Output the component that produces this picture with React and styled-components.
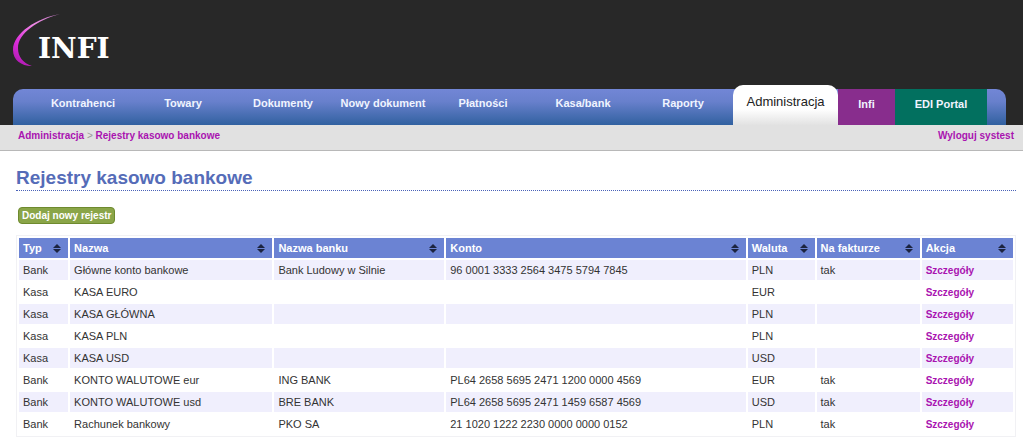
import React from "react";
import styled, { createGlobalStyle, css } from "styled-components";

const GlobalStyle = createGlobalStyle`
  body {
    margin: 0;
    background: #fff;
    color: #333;
    font: 11px/16px "Liberation Sans", Arial, sans-serif;
  }
`;

const Header = styled.header`
  display: flex;
  flex-direction: column;
  gap: 17px;
  background: #282828;
`;

const Logo = styled.a`
  align-self: flex-start;
  display: block;
  padding: 12px 0 0 12px;
  line-height: 0;
`;

const LogoWord = styled.text`
  fill: #fff;
  font: bold 28px "DejaVu Serif", serif;
`;

const Nav = styled.nav`
  display: flex;
  align-items: flex-end;
  height: 36px;
  margin: 0 17px 0 13px;
  padding: 0 19px 0 20px;
  border-radius: 10px 10px 0 0;
  background: linear-gradient(#7286d6, #6880cc 35%, #3161a0);
`;

const NavLink = styled.a`
  flex: ${(p) => p.$grow || 100} 1 0;
  box-sizing: border-box;
  height: 36px;
  padding-top: ${(p) => (p.$color ? 7 : 6)}px;
  background: ${(p) => p.$color || "transparent"};
  color: #f0f4ff;
  font-weight: bold;
  text-align: center;
  text-decoration: none;
  white-space: nowrap;

  ${(p) =>
    p.$active &&
    css`
      height: 40px;
      padding-top: 9px;
      border-radius: 10px 10px 0 0;
      background: linear-gradient(#fff 60%, #e2e2e2);
      color: #222;
      font-size: 13px;
      font-weight: normal;
    `}
`;

const SubBar = styled.div`
  display: flex;
  justify-content: space-between;
  padding: 3px 9px 6px 18px;
  border-bottom: 1px solid #b8b8b8;
  background: #e1e1e1;
  color: #999;
  font-size: 10px;
`;

const TextLink = styled.a`
  color: #a913b0;
  font-size: 10px;
  font-weight: bold;
  text-decoration: none;
`;

const Main = styled.main`
  padding: 15px 7px 8px 16px;
`;

const Title = styled.h1`
  margin: 0 0 16px;
  border-bottom: 1px dotted #4a62b8;
  color: #556cb8;
  font-size: 19px;
  line-height: 24px;
`;

const AddButton = styled.button`
  display: block;
  height: 17px;
  margin: 0 0 11px 2px;
  padding: 0 3px;
  border: 1px solid #6e8a2e;
  border-radius: 4px;
  background: #8aa548;
  color: #fff;
  font: bold 10px/15px "Liberation Sans", Arial, sans-serif;
  white-space: nowrap;
`;

const Table = styled.table`
  width: 100%;
  table-layout: fixed;
  border: 1px solid #f1f1f4;
  border-collapse: separate;
  border-spacing: 2px;
`;

const Col = styled.col`
  width: ${(p) => p.$share}%;
`;

const HeadCell = styled.th`
  height: 20px;
  padding: 0 7px 0 4px;
  background: #6b83d3;
  color: #fff;
  text-align: left;
  white-space: nowrap;
`;

const HeadContent = styled.div`
  display: flex;
  align-items: center;
  justify-content: space-between;
`;

const Row = styled.tr`
  background: #fff;

  &:nth-child(odd) td {
    background: #f0effd;
  }
`;

const Cell = styled.td`
  height: 20px;
  padding: 0 4px;
  white-space: nowrap;
`;

const navItems = [
  { label: "Kontrahenci" },
  { label: "Towary" },
  { label: "Dokumenty" },
  { label: "Nowy dokument" },
  { label: "Płatności" },
  { label: "Kasa/bank" },
  { label: "Raporty" },
  { label: "Administracja", grow: 105, active: true },
  { label: "Infi", grow: 57, color: "#882d8d" },
  { label: "EDI Portal", grow: 92, color: "#02705f" },
];

const columns = [
  { label: "Typ", share: 5 },
  { label: "Nazwa", share: 20.6 },
  { label: "Nazwa banku", share: 17.3 },
  { label: "Konto", share: 30.5 },
  { label: "Waluta", share: 6.8 },
  { label: "Na fakturze", share: 10.5 },
  { label: "Akcja", share: 9.3 },
];

const registers = [
  ["Bank", "Główne konto bankowe", "Bank Ludowy w Silnie", "96 0001 3333 2564 3475 5794 7845", "PLN", "tak"],
  ["Kasa", "KASA EURO", "", "", "EUR", ""],
  ["Kasa", "KASA GŁÓWNA", "", "", "PLN", ""],
  ["Kasa", "KASA PLN", "", "", "PLN", ""],
  ["Kasa", "KASA USD", "", "", "USD", ""],
  ["Bank", "KONTO WALUTOWE eur", "ING BANK", "PL64 2658 5695 2471 1200 0000 4569", "EUR", "tak"],
  ["Bank", "KONTO WALUTOWE usd", "BRE BANK", "PL64 2658 5695 2471 1459 6587 4569", "USD", "tak"],
  ["Bank", "Rachunek bankowy", "PKO SA", "21 1020 1222 2230 0000 0000 0152", "PLN", "tak"],
];

function InfiLogo() {
  return (
    <svg width="106" height="60" viewBox="0 0 106 60" role="img" aria-label="INFI">
      <defs>
        <linearGradient id="swoosh" x1="0.8" y1="0" x2="0.2" y2="1">
          <stop offset="0" stopColor="#c77ac6" />
          <stop offset="0.3" stopColor="#f08be6" />
          <stop offset="0.7" stopColor="#dd2edb" />
          <stop offset="1" stopColor="#b31bb5" />
        </linearGradient>
      </defs>
      <path
        d="M48 2 C25 6 1 21 1 38 C1 48 9 54 20 54 C11 51 6 45 6 36 C6 21 26 8 48 2 Z"
        fill="url(#swoosh)"
      />
      <LogoWord x="26" y="46">INFI</LogoWord>
    </svg>
  );
}

function SortIcon() {
  return (
    <svg width="8" height="9" viewBox="0 0 8 9" aria-hidden="true">
      <path d="M4 0 L8 4 H0 Z M0 5 H8 L4 9 Z" fill="#1c2440" />
    </svg>
  );
}

export default function App() {
  return (
    <>
      <GlobalStyle />
      <Header>
        <Logo href="#">
          <InfiLogo />
        </Logo>
        <Nav>
          {navItems.map((item) => (
            <NavLink key={item.label} href="#" $grow={item.grow} $active={item.active} $color={item.color}>
              {item.label}
            </NavLink>
          ))}
        </Nav>
      </Header>
      <SubBar>
        <div>
          <TextLink href="#">Administracja</TextLink> &gt; <TextLink href="#">Rejestry kasowo bankowe</TextLink>
        </div>
        <TextLink href="#">Wyloguj systest</TextLink>
      </SubBar>
      <Main>
        <Title>Rejestry kasowo bankowe</Title>
        <AddButton type="button">Dodaj nowy rejestr</AddButton>
        <Table>
          <colgroup>
            {columns.map((c) => (
              <Col key={c.label} $share={c.share} />
            ))}
          </colgroup>
          <thead>
            <tr>
              {columns.map((c) => (
                <HeadCell key={c.label} scope="col">
                  <HeadContent>
                    {c.label}
                    <SortIcon />
                  </HeadContent>
                </HeadCell>
              ))}
            </tr>
          </thead>
          <tbody>
            {registers.map((r) => (
              <Row key={r[1]}>
                {r.map((value, i) => (
                  <Cell key={i}>{value}</Cell>
                ))}
                <Cell>
                  <TextLink href="#">Szczegóły</TextLink>
                </Cell>
              </Row>
            ))}
          </tbody>
        </Table>
      </Main>
    </>
  );
}
